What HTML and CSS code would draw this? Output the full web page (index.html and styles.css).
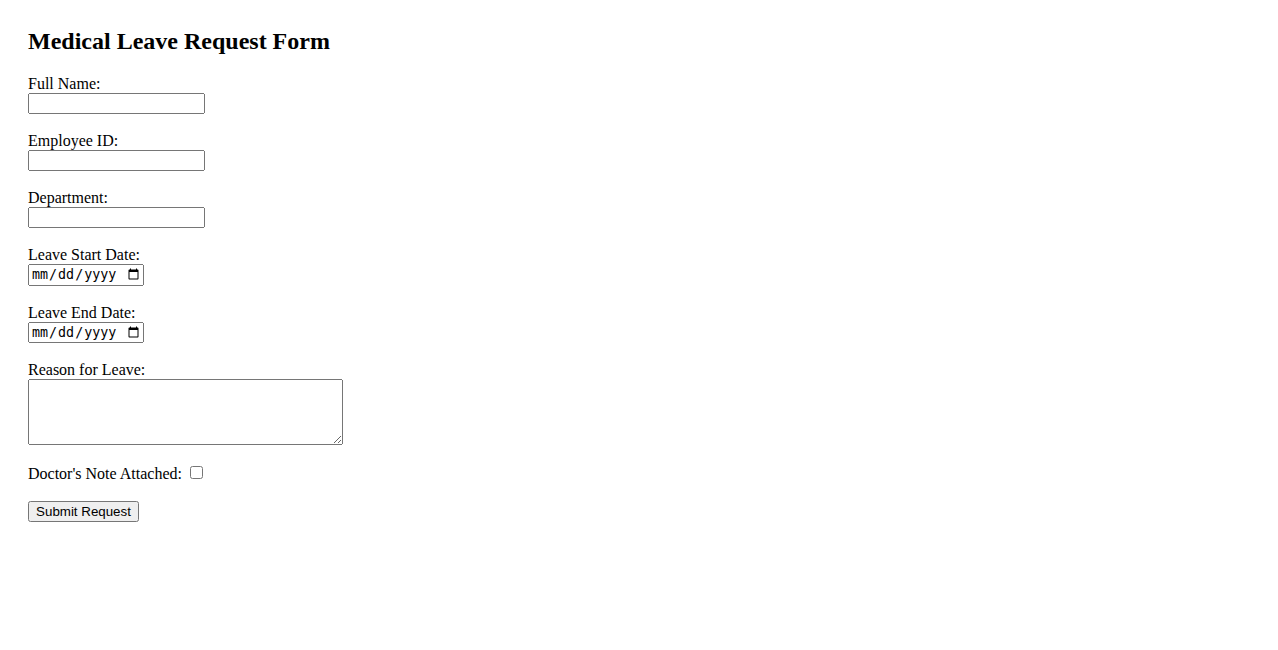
FILE: index.html
```html
<!DOCTYPE html>
<html lang="en">

<head>
    <meta charset="UTF-8">
    <meta name="viewport" content="width=device-width, initial-scale=1.0">
    <title>Medical Leave Request Form</title>
    <link rel="stylesheet" href="styles.css">
</head>

<body>
    <div class="wrap">
        <h2>Medical Leave Request Form</h2>
        <form class="leave-form">
            <label for="name">Full Name:</label><br>
            <input type="text" id="name" class="txt"><br><br>

            <label for="empid">Employee ID:</label><br>
            <input type="text" id="empid" class="txt"><br><br>

            <label for="dept">Department:</label><br>
            <input type="text" id="dept" class="txt"><br><br>

            <label for="start">Leave Start Date:</label><br>
            <input type="date" id="start" class="date"><br><br>

            <label for="end">Leave End Date:</label><br>
            <input type="date" id="end" class="date"><br><br>

            <label for="reason">Reason for Leave:</label><br>
            <textarea id="reason" class="reason"></textarea><br><br>

            <label for="note">Doctor's Note Attached:</label>
            <input type="checkbox" id="note"><br><br>

            <button type="submit" class="submit">Submit Request</button>
        </form>
    </div>
</body>

</html>
```

FILE: styles.css
```css
body {
    margin: 0;
    padding: 28px;
    font-family: "Liberation Serif", "Times New Roman", serif;
    font-size: 16px;
    color: #000;
    background: #fff;
}

h2 {
    margin: 0 0 20px;
    font-size: 24px;
}

.txt {
    box-sizing: border-box;
    width: 177px;
    height: 21px;
}

.date {
    box-sizing: border-box;
    width: 116px;
    height: 21.5px;
}

.reason {
    box-sizing: border-box;
    width: 315px;
    height: 66px;
    vertical-align: bottom;
}

.submit {
    font-family: "Liberation Sans", Arial, sans-serif;
    font-size: 13.33px;
    height: 21px;
    width: 111px;
    padding: 1px 6px;
}
```
